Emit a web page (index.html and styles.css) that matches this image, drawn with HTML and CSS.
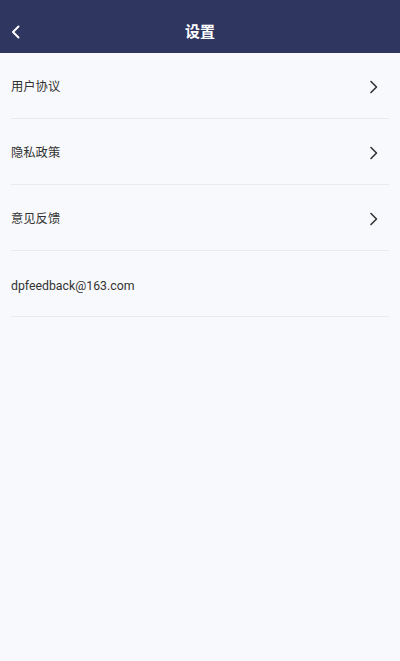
FILE: index.html
```html
<!DOCTYPE html>
<html lang="zh">
<head>
<meta charset="utf-8">
<title>设置</title>
<link rel="stylesheet" href="styles.css">
</head>
<body>
<div class="page">
  <header class="topbar">
    <span class="back">
      <svg width="12" height="14" viewBox="0 0 12 14"><path d="M8.5 1.5 L3 7 L8.5 12.5" fill="none" stroke="#ffffff" stroke-width="2" stroke-linecap="round" stroke-linejoin="round"/></svg>
    </span>
    <h1 class="title">设置</h1>
  </header>
  <ul class="list">
    <li class="row"><span class="label">用户协议</span><svg class="chev" width="10" height="14" viewBox="0 0 10 14"><path d="M2 1.5 L7.5 7 L2 12.5" fill="none" stroke="#333333" stroke-width="1.6" stroke-linecap="round" stroke-linejoin="round"/></svg></li>
    <li class="row"><span class="label">隐私政策</span><svg class="chev" width="10" height="14" viewBox="0 0 10 14"><path d="M2 1.5 L7.5 7 L2 12.5" fill="none" stroke="#333333" stroke-width="1.6" stroke-linecap="round" stroke-linejoin="round"/></svg></li>
    <li class="row"><span class="label">意见反馈</span><svg class="chev" width="10" height="14" viewBox="0 0 10 14"><path d="M2 1.5 L7.5 7 L2 12.5" fill="none" stroke="#333333" stroke-width="1.6" stroke-linecap="round" stroke-linejoin="round"/></svg></li>
    <li class="row"><span class="label email">dpfeedback@163.com</span></li>
  </ul>
</div>
</body>
</html>
```
FILE: styles.css
```css
* { box-sizing: border-box; }
html, body {
  margin: 0;
  padding: 0;
  background: #f8f9fc;
  font-family: Roboto, "Noto Sans CJK SC", sans-serif;
}
.page {
  width: 400px;
  min-height: 661px;
  background: #f8f9fc;
}
.topbar {
  position: relative;
  height: 53px;
  background: #2f3761;
  display: flex;
  align-items: center;
  justify-content: center;
  padding-top: 11px;
}
.back {
  position: absolute;
  left: 10px;
  top: 25px;
  width: 12px;
  height: 14px;
  display: flex;
}
.title {
  margin: 0;
  font-size: 15px;
  font-weight: 700;
  color: #ffffff;
  line-height: 20px;
}
.list {
  list-style: none;
  margin: 0;
  padding: 0 11px;
}
.row {
  height: 66px;
  display: flex;
  align-items: center;
  justify-content: space-between;
  border-bottom: 1px solid #e9eaed;
  padding-top: 2px;
}
.label {
  font-size: 12.3px;
  color: #333333;
  line-height: 18px;
}
.email {
  padding-top: 2px;
}
.chev {
  margin-right: 10px;
}
```
